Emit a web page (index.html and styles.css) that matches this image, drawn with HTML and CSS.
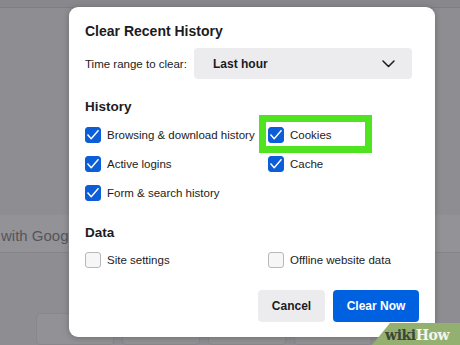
FILE: index.html
```html
<!DOCTYPE html>
<html lang="en">
<head>
    <meta charset="UTF-8">
    <title>Clear Recent History</title>
    <link rel="stylesheet" href="styles.css">
</head>
<body>
    <div class="backdrop">
        <div class="topbar"></div>
        <div class="search">
            <span class="search-text">with Google</span>
        </div>
        <div class="tiles">
            <div class="tile"></div>
            <div class="tile"></div>
            <div class="tile"></div>
            <div class="tile"></div>
        </div>
    </div>

    <div class="dialog">
        <h1 class="title">Clear Recent History</h1>

        <div class="range">
            <span class="range-label">Time range to clear:</span>
            <div class="select">
                <span>Last hour</span>
                <svg class="chevron" width="13" height="8" viewBox="0 0 13 8">
                    <path d="M1 1 L6.5 6.5 L12 1" fill="none" stroke="#1c1b22" stroke-width="1.5" stroke-linecap="round" stroke-linejoin="round"/>
                </svg>
            </div>
        </div>

        <h2 class="section">History</h2>
        <div class="options">
            <label class="option"><span class="box checked"></span>Browsing &amp; download history</label>
            <label class="option"><span class="box checked"></span>Cookies<span class="highlight"></span></label>
            <label class="option"><span class="box checked"></span>Active logins</label>
            <label class="option"><span class="box checked"></span>Cache</label>
            <label class="option"><span class="box checked"></span>Form &amp; search history</label>
        </div>

        <h2 class="section data">Data</h2>
        <div class="options data-options">
            <label class="option"><span class="box"></span>Site settings</label>
            <label class="option"><span class="box"></span>Offline website data</label>
        </div>

        <div class="actions">
            <button class="btn cancel">Cancel</button>
            <button class="btn primary">Clear Now</button>
        </div>
    </div>

    <div class="watermark"><span class="wiki">wiki</span><span class="how">How</span></div>
</body>
</html>
```

FILE: styles.css
```css
body {
    margin: 0;
    width: 460px;
    height: 345px;
    overflow: hidden;
    background: #8e8e92;
    font-family: "Liberation Sans", Arial, sans-serif;
    color: #1c1b22;
    position: relative;
}

.backdrop {
    height: 100%;
    display: flex;
    flex-direction: column;
}

.topbar {
    height: 10px;
    background: #88888c;
    border-bottom: 1px solid #7f7f83;
}

.search {
    margin-top: 207px;
    height: 50px;
    background: #939397;
    border-bottom: 1px solid #858589;
    display: flex;
    align-items: center;
    padding-top: 4px;
    box-sizing: border-box;
}

.search-text {
    font-size: 15px;
    color: #55555a;
    margin-left: 1px;
    white-space: nowrap;
}

.tiles {
    margin-top: 60px;
    display: flex;
    gap: 8px;
    padding-left: 36px;
}

.tile {
    width: 76px;
    height: 30px;
    background: #929296;
    border: 1px solid #88888c;
    border-radius: 4px;
}

.dialog {
    position: absolute;
    left: 69px;
    top: 7px;
    width: 366px;
    height: 330px;
    box-sizing: border-box;
    padding: 15px 16px 16px 16px;
    background: #ffffff;
    border-radius: 9px;
    box-shadow: 0 1px 6px rgba(0,0,0,0.25);
}

.title {
    margin: 0;
    font-size: 14px;
    line-height: 18px;
    font-weight: bold;
}

.range {
    margin-top: 8px;
    display: flex;
    align-items: center;
    font-size: 11.5px;
}

.range-label {
    width: 109px;
}

.select {
    width: 218px;
    height: 31px;
    box-sizing: border-box;
    background: #ececef;
    border-radius: 4px;
    display: flex;
    align-items: center;
    justify-content: space-between;
    padding: 0 17px 0 19px;
    font-size: 12px;
    font-weight: bold;
}

.chevron {
    display: block;
}

.section {
    margin: 19px 0 0 0;
    font-size: 13.5px;
    line-height: 18px;
    font-weight: bold;
}

.section.data {
    margin-top: 23px;
}

.options {
    margin-top: 11px;
    display: grid;
    grid-template-columns: 183px 1fr;
    row-gap: 13px;
    font-size: 11.5px;
}

.data-options {
    margin-top: 10px;
}

.option {
    display: flex;
    align-items: center;
    height: 16px;
    white-space: nowrap;
    position: relative;
}

.box {
    width: 16px;
    height: 16px;
    box-sizing: border-box;
    border: 1px solid #b8b8bc;
    background: #f6f6f7;
    border-radius: 3px;
    margin-right: 6px;
    flex-shrink: 0;
}

.box.checked {
    border-color: #0b5ed7;
    background: #0b5ed7 url("data:image/svg+xml;utf8,<svg xmlns='http://www.w3.org/2000/svg' width='16' height='16' viewBox='0 0 16 16'><path d='M2.5 7.5 L6.2 11.8 L13.5 3.2' fill='none' stroke='white' stroke-width='1.4' stroke-linejoin='round'/></svg>") center / 16px 16px no-repeat;
}

.highlight {
    position: absolute;
    left: -9px;
    top: -12px;
    width: 113px;
    height: 38px;
    box-sizing: border-box;
    border: 7px solid #4fe41f;
}

.actions {
    margin-top: 22px;
    display: flex;
    justify-content: flex-end;
    gap: 8px;
}

.btn {
    height: 32px;
    border: none;
    border-radius: 4px;
    font-family: inherit;
    font-size: 12px;
    font-weight: bold;
    cursor: pointer;
}

.cancel {
    width: 67px;
    background: #ececef;
    color: #1c1b22;
}

.primary {
    width: 86px;
    background: #0061e0;
    color: #ffffff;
}

.watermark {
    position: absolute;
    right: 0;
    bottom: 0;
    width: 88px;
    height: 22px;
    background: #93b070;
    clip-path: polygon(18px 0, 100% 0, 100% 100%, 0 100%);
    font-family: "DejaVu Serif", "Liberation Serif", serif;
    font-weight: bold;
    font-size: 14px;
    line-height: 24px;
    padding-left: 13px;
    letter-spacing: -0.4px;
    box-sizing: border-box;
    white-space: nowrap;
}

.wiki {
    color: #3d4536;
}

.how {
    color: #f3f5ef;
}
```
